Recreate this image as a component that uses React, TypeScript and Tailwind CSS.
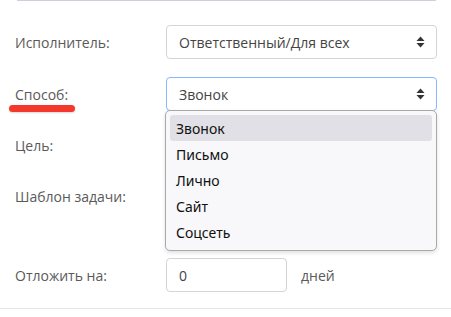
import React from "react";

function Arrows() {
  return (
    <svg width="9" height="12" viewBox="0 0 9 12" className="absolute right-[11px] top-1/2 -translate-y-1/2">
      <path d="M4.5 0.5 L8.5 5 L0.5 5 Z" fill="#333" />
      <path d="M4.5 11.5 L8.5 7 L0.5 7 Z" fill="#333" />
    </svg>
  );
}

function Select({ value, focused }: { value: string; focused?: boolean }) {
  return (
    <div
      className={
        "relative h-[34px] w-[271px] rounded-[4px] border bg-white pl-[12px] flex items-center text-[14px] text-[#444] " +
        (focused ? "border-[#86b7fe]" : "border-[#d4d4d4]")
      }
    >
      <span>{value}</span>
      <Arrows />
    </div>
  );
}

function Label({ children }: { children: React.ReactNode }) {
  return <div className="w-[166px] pl-[15px] text-[14px] text-[#5a5a5a]">{children}</div>;
}

export default function App() {
  const items = ["Звонок", "Письмо", "Лично", "Сайт", "Соцсеть"];
  return (
    <div className="relative w-[451px] h-[317px] bg-white overflow-hidden" style={{ fontFamily: '"Open Sans", "Noto Sans", sans-serif' }}>
      <div className="ml-[17px] w-[419px] h-[1px] bg-[#cbd2db]" />
      <div className="flex items-center mt-[24px]">
        <Label>Исполнитель:</Label>
        <Select value="Ответственный/Для всех" />
      </div>
      <div className="relative flex items-center mt-[18px]">
        <Label>Способ:</Label>
        <div className="absolute left-[9px] top-[28px] w-[66px] h-[7px] rounded-full bg-[#f5382c] shadow-[0_1px_2px_rgba(0,0,0,0.15)]" />
        <div className="relative">
          <Select value="Звонок" focused />
        </div>
      </div>
      <div className="flex items-center mt-[17px]">
        <Label>Цель:</Label>
        <Select value="" />
      </div>
      <div className="flex items-center mt-[17px]">
        <Label>Шаблон задачи:</Label>
        <Select value="" />
      </div>
      <div className="flex items-center mt-[45px]">
        <Label>Отложить на:</Label>
        <div className="h-[34px] w-[121px] rounded-[4px] border border-[#d4d4d4] bg-white pl-[12px] flex items-center text-[14px] text-[#444]">0</div>
        <div className="ml-[14px] text-[14px] text-[#5a5a5a]">дней</div>
      </div>
      <div className="mt-[16px] h-[1px] w-full bg-[#e6e6e6]" />

      <div
        className="absolute left-[165px] top-[110px] w-[272px] h-[141px] rounded-[5px] border border-[#a9a9a9] bg-[#f8f8fa] px-[4px] pt-[4px] shadow-[0_2px_4px_rgba(0,0,0,0.12)]"
        style={{ fontFamily: '"Noto Sans", sans-serif' }}
      >
        {items.map((it, i) => (
          <div
            key={it}
            className={
              "h-[26px] flex items-center pl-[6px] rounded-[3px] text-[14px] text-[#111] " +
              (i === 0 ? "bg-[#e1e0e6]" : "")
            }
          >
            {it}
          </div>
        ))}
      </div>
    </div>
  );
}
